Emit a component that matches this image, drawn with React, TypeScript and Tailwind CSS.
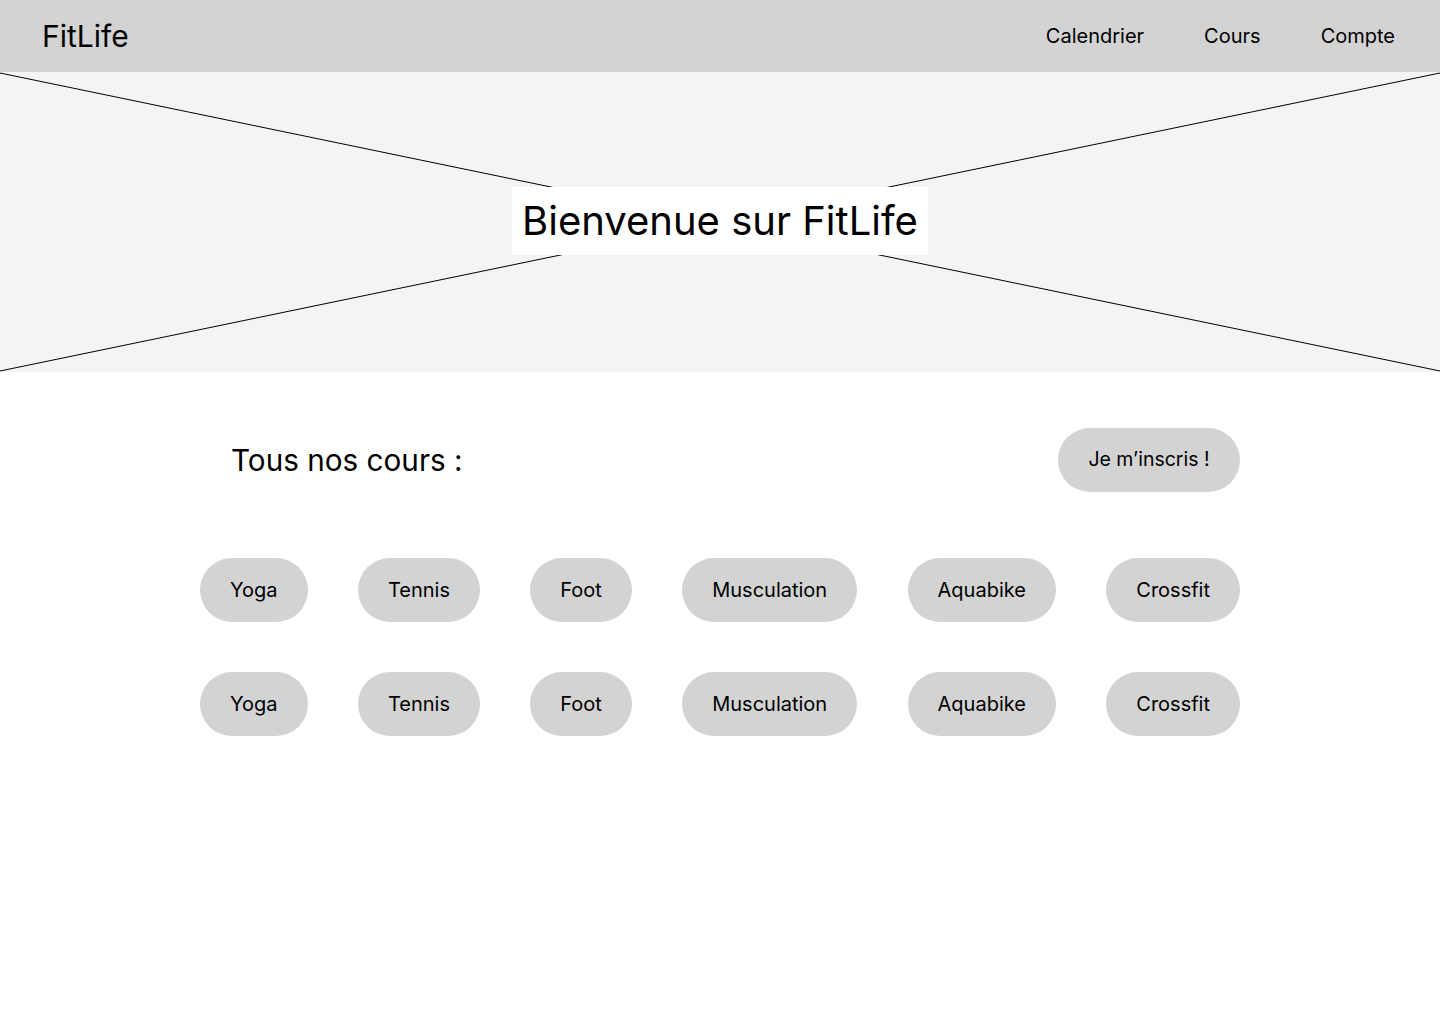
const courses = ["Yoga", "Tennis", "Foot", "Musculation", "Aquabike", "Crossfit"];

function Pill({ label }: { label: string }) {
  return (
    <button className="h-16 rounded-full bg-[#d3d3d3] px-[30px] text-[20px] text-black">
      {label}
    </button>
  );
}

export default function App() {
  return (
    <div className="min-h-[1024px] bg-white font-['Inter',sans-serif] text-black">
      <header className="flex h-[72px] items-center justify-between bg-[#d3d3d3] pl-[42px] pr-[45px]">
        <div className="text-[30px] leading-none">FitLife</div>
        <nav className="flex gap-[60px] text-[20px]">
          <a>Calendrier</a>
          <a>Cours</a>
          <a>Compte</a>
        </nav>
      </header>

      <section className="relative flex h-[300px] items-center justify-center bg-[#f4f4f4]">
        <svg className="absolute inset-0 h-full w-full" viewBox="0 0 1440 300" preserveAspectRatio="none">
          <line x1="0" y1="1" x2="1440" y2="299" stroke="#000" strokeWidth="1" vectorEffect="non-scaling-stroke" />
          <line x1="1440" y1="1" x2="0" y2="299" stroke="#000" strokeWidth="1" vectorEffect="non-scaling-stroke" />
        </svg>
        <h1 className="relative -mt-[2px] bg-white px-[10px] py-[10px] text-[40px] leading-[48px]">
          Bienvenue sur FitLife
        </h1>
      </section>

      <main className="mx-auto w-[1040px] pt-[56px]">
        <div className="flex items-center justify-between pl-[31px]">
          <h2 className="text-[29.7px]">Tous nos cours :</h2>
          <button className="h-16 w-[182px] rounded-full bg-[#d3d3d3] text-[19.5px]">Je m’inscris !</button>
        </div>
        <div className="mt-[66px] flex flex-col gap-[50px]">
          {[0, 1].map((r) => (
            <div key={r} className="flex justify-between">
              {courses.map((c) => (
                <Pill key={c} label={c} />
              ))}
            </div>
          ))}
        </div>
      </main>
    </div>
  );
}
